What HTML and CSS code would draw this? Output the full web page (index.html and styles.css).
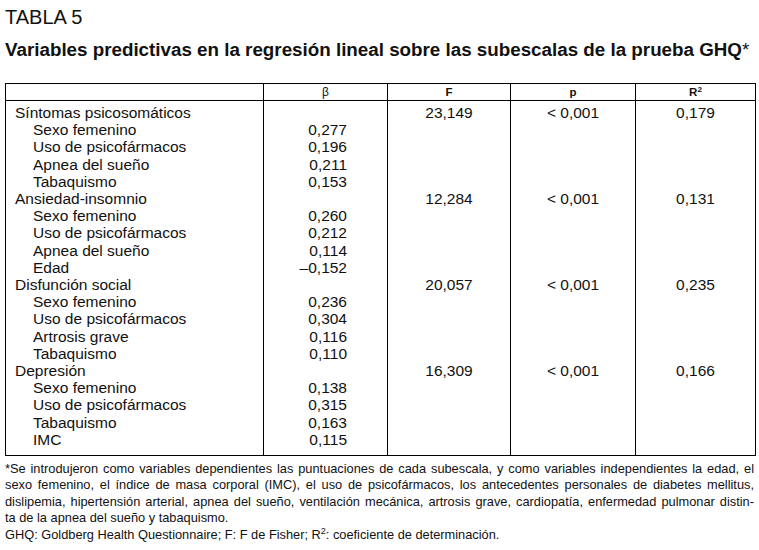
FILE: index.html
```html
<!DOCTYPE html>
<html lang="es">
<head>
<meta charset="utf-8">
<title>Tabla 5</title>
<link rel="stylesheet" href="styles.css">
</head>
<body>
<div class="page">
  <div class="label">TABLA 5</div>
  <h1 class="title">Variables predictivas en la regresión lineal sobre las subescalas de la prueba GHQ<span class="ast">*</span></h1>
  <table class="data">
    <colgroup>
      <col class="c-name"><col class="c-beta"><col class="c-f"><col class="c-p"><col class="c-r">
    </colgroup>
    <thead>
      <tr><th></th><th class="beta">β</th><th>F</th><th>p</th><th>R<sup>2</sup></th></tr>
    </thead>
    <tbody>
      <tr><td class="grp">Síntomas psicosomáticos</td><td></td><td class="ctr">23,149</td><td class="ctr">&lt; 0,001</td><td class="ctr">0,179</td></tr>
      <tr><td class="sub">Sexo femenino</td><td class="num">0,277</td><td></td><td></td><td></td></tr>
      <tr><td class="sub">Uso de psicofármacos</td><td class="num">0,196</td><td></td><td></td><td></td></tr>
      <tr><td class="sub">Apnea del sueño</td><td class="num">0,211</td><td></td><td></td><td></td></tr>
      <tr><td class="sub">Tabaquismo</td><td class="num">0,153</td><td></td><td></td><td></td></tr>
      <tr><td class="grp">Ansiedad-insomnio</td><td></td><td class="ctr">12,284</td><td class="ctr">&lt; 0,001</td><td class="ctr">0,131</td></tr>
      <tr><td class="sub">Sexo femenino</td><td class="num">0,260</td><td></td><td></td><td></td></tr>
      <tr><td class="sub">Uso de psicofármacos</td><td class="num">0,212</td><td></td><td></td><td></td></tr>
      <tr><td class="sub">Apnea del sueño</td><td class="num">0,114</td><td></td><td></td><td></td></tr>
      <tr><td class="sub">Edad</td><td class="num">–0,152</td><td></td><td></td><td></td></tr>
      <tr><td class="grp">Disfunción social</td><td></td><td class="ctr">20,057</td><td class="ctr">&lt; 0,001</td><td class="ctr">0,235</td></tr>
      <tr><td class="sub">Sexo femenino</td><td class="num">0,236</td><td></td><td></td><td></td></tr>
      <tr><td class="sub">Uso de psicofármacos</td><td class="num">0,304</td><td></td><td></td><td></td></tr>
      <tr><td class="sub">Artrosis grave</td><td class="num">0,116</td><td></td><td></td><td></td></tr>
      <tr><td class="sub">Tabaquismo</td><td class="num">0,110</td><td></td><td></td><td></td></tr>
      <tr><td class="grp">Depresión</td><td></td><td class="ctr">16,309</td><td class="ctr">&lt; 0,001</td><td class="ctr">0,166</td></tr>
      <tr><td class="sub">Sexo femenino</td><td class="num">0,138</td><td></td><td></td><td></td></tr>
      <tr><td class="sub">Uso de psicofármacos</td><td class="num">0,315</td><td></td><td></td><td></td></tr>
      <tr><td class="sub">Tabaquismo</td><td class="num">0,163</td><td></td><td></td><td></td></tr>
      <tr><td class="sub">IMC</td><td class="num">0,115</td><td></td><td></td><td></td></tr>
    </tbody>
  </table>
  <div class="note">
    <span class="ln">*Se introdujeron como variables dependientes las puntuaciones de cada subescala, y como variables independientes la edad, el</span>
    <span class="ln">sexo femenino, el índice de masa corporal (IMC), el uso de psicofármacos, los antecedentes personales de diabetes mellitus,</span>
    <span class="ln">dislipemia, hipertensión arterial, apnea del sueño, ventilación mecánica, artrosis grave, cardiopatía, enfermedad pulmonar distin-</span>
    <span class="ln ln-last">ta de la apnea del sueño y tabaquismo.</span>
    <span class="ln ln-last">GHQ: Goldberg Health Questionnaire; F: F de Fisher; R<sup>2</sup>: coeficiente de determinación.</span>
  </div>
</div>
</body>
</html>
```

FILE: styles.css
```css
html, body {
  margin: 0;
  padding: 0;
  background: #ffffff;
}

body {
  font-family: "Liberation Sans", Arial, sans-serif;
  color: #111111;
}

.page {
  padding: 7px 5px 0 5px;
  width: 749px;
}

.label {
  font-size: 20px;
  line-height: 20px;
  font-weight: normal;
}

.title {
  margin: 10.5px 0 0 0;
  font-size: 18.8px;
  line-height: 24px;
  font-weight: bold;
  white-space: nowrap;
}

.title .ast {
  font-weight: normal;
}

.data {
  margin-top: 21.5px;
  border-collapse: collapse;
  width: 750px;
  table-layout: fixed;
  border: 1px solid #000;
}

.c-name { width: 258px; }
.c-beta { width: 124px; }
.c-f { width: 123px; }
.c-p { width: 125px; }
.c-r { width: 120px; }

.data th {
  border: 1px solid #000;
  height: 16px;
  padding: 0;
  font-size: 11.5px;
  font-weight: bold;
  text-align: center;
  vertical-align: middle;
}

.data th.beta {
  font-weight: normal;
  font-size: 12px;
}

.data th sup {
  font-size: 8px;
  vertical-align: 4px;
  line-height: 0;
}

.data td {
  border-left: 1px solid #000;
  border-right: 1px solid #000;
  padding: 0;
  font-size: 15.5px;
  line-height: 17.2px;
  height: 17.2px;
  white-space: nowrap;
}

.data tbody tr:first-child td {
  padding-top: 3px;
}

.data tbody tr:last-child td {
  padding-bottom: 7px;
}

.grp { padding-left: 9px !important; }
.sub { padding-left: 27px !important; }
.num { text-align: right; padding-right: 40px !important; }
.ctr { text-align: center; }

.note {
  margin: 5px 0 0 0;
  font-size: 12.8px;
  line-height: 16.4px;
}

.ln {
  display: block;
  text-align: justify;
  text-align-last: justify;
  white-space: nowrap;
}

.ln.ln-last {
  text-align: left;
  text-align-last: left;
}

.note sup {
  font-size: 9px;
  vertical-align: 5px;
  line-height: 0;
}
```
